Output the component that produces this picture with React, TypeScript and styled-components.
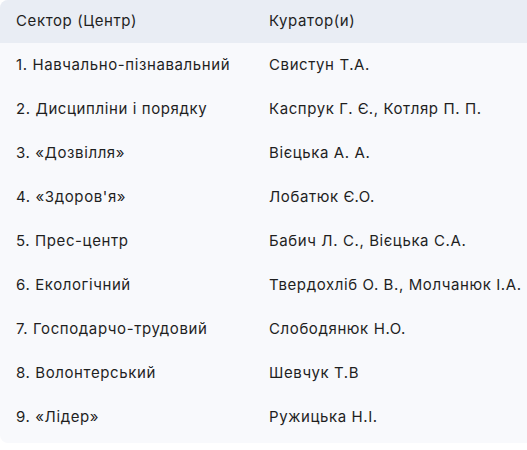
import React from "react";
import styled, { createGlobalStyle } from "styled-components";

const Global = createGlobalStyle`
  html, body { margin: 0; padding: 0; background: #ffffff; }
  body { font-family: Inter, "Noto Sans", sans-serif; color: #1f1f1f; }
  #root { width: 527px; overflow: hidden; }
`;

const Frame = styled.div`
  width: 527px;
  overflow: hidden;
`;

const Card = styled.div`
  width: 620px;
  background: #f8f9fc;
  border-radius: 8px;
  overflow: hidden;
  padding-bottom: 4px;
`;

const Table = styled.table`
  width: 100%;
  border-collapse: separate;
  border-spacing: 0;
  font-size: 15px;
  letter-spacing: 0.6px;
  line-height: 20px;
  color: #1f1f1f;
`;

const HeadRow = styled.tr`
  background: #e9edf4;
`;

const HeadCell = styled.th<{ $w?: number }>`
  text-align: left;
  font-weight: 400;
  padding: 11px 16px 11.5px 16px;
  width: ${(p) => (p.$w ? `${p.$w}px` : "auto")};
  white-space: nowrap;
`;

const Cell = styled.td`
  padding: 12px 16px;
  white-space: nowrap;
`;

const rows: [string, string][] = [
  ["1. Навчально-пізнавальний", "Свистун Т.А."],
  ["2. Дисципліни і порядку", "Каспрук Г. Є., Котляр П. П."],
  ["3. «Дозвілля»", "Вієцька А. А."],
  ["4. «Здоров'я»", "Лобатюк Є.О."],
  ["5. Прес-центр", "Бабич Л. С., Вієцька С.А."],
  ["6. Екологічний", "Твердохліб О. В., Молчанюк І.А."],
  ["7. Господарчо-трудовий", "Слободянюк Н.О."],
  ["8. Волонтерський", "Шевчук Т.В"],
  ["9. «Лідер»", "Ружицька Н.І."],
];

export default function App() {
  return (
    <Frame>
      <Global />
      <Card>
        <Table>
          <thead>
            <HeadRow>
              <HeadCell $w={221}>Сектор (Центр)</HeadCell>
              <HeadCell>Куратор(и)</HeadCell>
            </HeadRow>
          </thead>
          <tbody>
            {rows.map(([a, b]) => (
              <tr key={a}>
                <Cell>{a}</Cell>
                <Cell>{b}</Cell>
              </tr>
            ))}
          </tbody>
        </Table>
      </Card>
    </Frame>
  );
}
